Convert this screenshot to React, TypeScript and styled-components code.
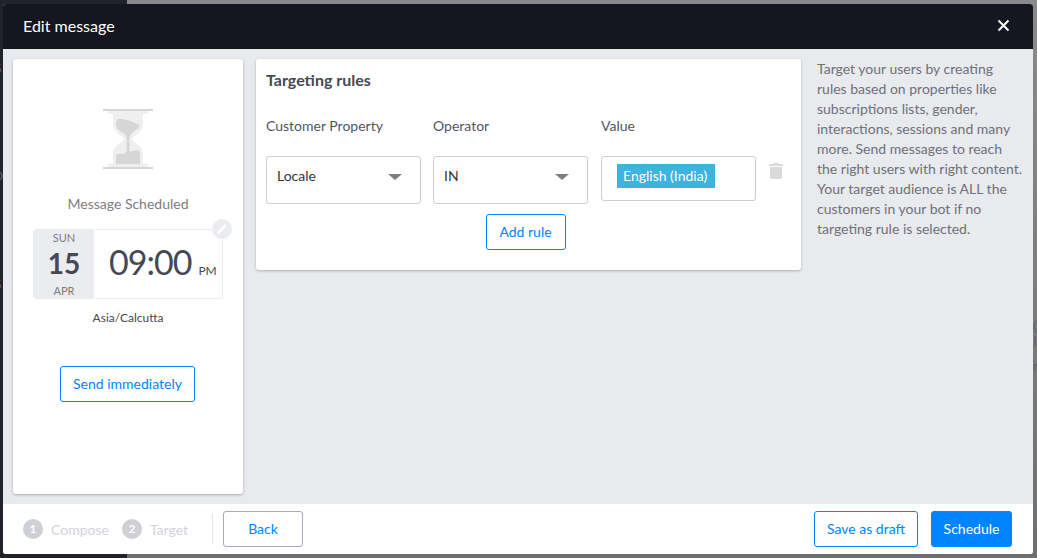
import { useState } from 'react'
import styled, { createGlobalStyle } from 'styled-components'

const GlobalStyle = createGlobalStyle`
	html, body {
		margin: 0;
		padding: 0;
		height: 100%;
		overflow: hidden;
	}
	body {
		font-family: 'Lato', 'Liberation Sans', sans-serif;
	}
	* {
		box-sizing: border-box;
	}
`

const Backdrop = styled.div`
	position: relative;
	width: 1037px;
	height: 558px;
	display: grid;
	grid-template-columns: 127px 1fr;
	overflow: hidden;
`

const DarkSide = styled.div`
	background-color: #21222a;
`

const GreySide = styled.div`
	background: linear-gradient(#8a8a8a, #6f6f6f);
`

const BehindGlyph = styled.span<{ $x: number; $y: number }>`
	position: absolute;
	left: ${({ $x }) => $x}px;
	top: ${({ $y }) => $y}px;
	font-size: 14px;
	line-height: 16px;
	color: #5c5f6b;
`

const Modal = styled.div`
	position: absolute;
	top: 4px;
	left: 3px;
	width: 1030px;
	height: 550px;
	display: flex;
	flex-direction: column;
	border-radius: 3px;
	overflow: hidden;
	background-color: #e9eaee;
`

const Header = styled.header`
	flex: 0 0 45px;
	display: flex;
	align-items: center;
	justify-content: space-between;
	padding: 0 22px 3px 20px;
	background-color: #15161f;
	color: #fff;
	font-size: 16px;
`

const CloseButton = styled.button`
	border: none;
	padding: 0;
	background: none;
	color: #fff;
	display: flex;
	width: 15px;
	height: 15px;
`

const Body = styled.main`
	flex: 1;
	display: grid;
	grid-template-columns: 230px 545px 1fr;
	column-gap: 13px;
	align-items: start;
	padding: 10px;
`

const Card = styled.section`
	background-color: #fff;
	border-radius: 3px;
	box-shadow: 0 1px 3px rgba(0, 0, 0, 0.25);
`

const StatusCard = styled(Card)`
	height: 435px;
	display: flex;
	flex-direction: column;
	align-items: center;
	padding: 50px 20px 0;
`

const StatusLabel = styled.div`
	margin-top: 26px;
	font-size: 14px;
	line-height: 18px;
	color: #7c7c85;
`

const DateBox = styled.div`
	position: relative;
	margin-top: 16px;
	width: 190px;
	height: 70px;
	display: flex;
	border: 1px solid #ebecf0;
	border-radius: 3px;
`

const DayColumn = styled.div`
	flex: 0 0 60px;
	display: flex;
	flex-direction: column;
	align-items: center;
	background-color: #ebecf0;
	color: #7b7c86;
	font-size: 11px;
	line-height: 16px;
`

const DayNumber = styled.div`
	margin: 1px 0 3px;
	font-size: 28px;
	font-weight: 700;
	line-height: 33px;
	color: #464853;
`

const TimeColumn = styled.div`
	flex: 1;
	display: flex;
	align-items: baseline;
	padding: 7px 0 0 15px;
	color: #464853;
`

const TimeValue = styled.span`
	font-size: 34px;
	letter-spacing: -1px;
	line-height: 50px;
`

const Meridiem = styled.span`
	margin-left: 7px;
	font-size: 12px;
`

const EditBadge = styled.span`
	position: absolute;
	top: -11px;
	right: -10px;
	width: 20px;
	height: 20px;
	border-radius: 50%;
	background-color: #ebecf0;
	display: flex;
	align-items: center;
	justify-content: center;
`

const Timezone = styled.div`
	margin-top: 10px;
	font-size: 12px;
	line-height: 18px;
	color: #464853;
`

const OutlineButton = styled.button<{ $width: number }>`
	width: ${({ $width }) => $width}px;
	height: 36px;
	padding: 0 0 2px;
	border: 1px solid #0084ff;
	border-radius: 3px;
	background-color: #fff;
	color: #0084ff;
	font-family: inherit;
	font-size: 14px;
`

const SendButton = styled(OutlineButton)`
	margin: 39px 1px 0 0;
`

const RulesCard = styled(Card)`
	height: 211px;
	padding: 12px 10px 0;
`

const RulesTitle = styled.h2`
	margin: 0;
	font-size: 16px;
	font-weight: 700;
	line-height: 18px;
	color: #464853;
`

const RuleGrid = styled.div`
	display: grid;
	grid-template-columns: 167px 168px 168px 1fr;
	align-items: start;
	margin-top: 28px;
`

const ColumnLabel = styled.div`
	height: 39px;
	font-size: 14px;
	line-height: 18px;
	color: #53555f;
`

const SelectBox = styled.div`
	width: 155px;
	height: 48px;
	display: flex;
	justify-content: space-between;
	padding: 11px 18px 0 10px;
	border: 1px solid #cdced4;
	border-radius: 3px;
	font-size: 14px;
	line-height: 16px;
	color: #33343c;
`

const Caret = styled.span`
	margin-top: 6px;
	width: 0;
	height: 0;
	border-left: 7px solid transparent;
	border-right: 7px solid transparent;
	border-top: 6px solid #7f7f7f;
`

const ValueBox = styled.div`
	width: 155px;
	height: 45px;
	padding: 7px 0 0 15px;
	border: 1px solid #cdced4;
	border-radius: 3px;
`

const ValueTag = styled.span`
	display: inline-block;
	height: 24px;
	padding: 0 8px 0 6px;
	background-color: #3db3de;
	color: #fff;
	font-size: 14px;
	line-height: 24px;
`

const DeleteIcon = styled.svg`
	margin: 7px 0 0 0;
	width: 14px;
	height: 16px;
	fill: #d9d9d9;
`

const AddRow = styled.div`
	display: flex;
	justify-content: center;
	margin-top: 10px;
	padding-right: 6px;
`

const HelpText = styled.p`
	margin: 0;
	padding: 0 0 0 3px;
	font-size: 14px;
	line-height: 20px;
	color: #6f7079;
`

const Footer = styled.footer`
	flex: 0 0 50px;
	display: flex;
	align-items: center;
	padding: 0 21px 0 20px;
	background-color: #fff;
`

const Step = styled.div`
	display: flex;
	align-items: center;
	gap: 8px;
	margin-right: 13px;
	font-size: 14px;
	color: #d3d3da;
`

const StepNumber = styled.span`
	width: 20px;
	height: 20px;
	border-radius: 50%;
	background-color: #cfcfd6;
	color: #fff;
	font-size: 12px;
	font-weight: 700;
	line-height: 20px;
	text-align: center;
`

const Divider = styled.div`
	width: 1px;
	height: 30px;
	margin: 0 10px 0 11px;
	background-color: #e6e6ea;
`

const BackButton = styled(OutlineButton)`
	border-color: #a9a9b8;
`

const FooterSpacer = styled.div`
	flex: 1;
`

const PrimaryButton = styled(OutlineButton)`
	margin-left: 13px;
	background-color: #0084ff;
	color: #fff;
`

const HourGlass = () => (
	<svg width='50' height='60' viewBox='0 0 50 60'>
		<rect x='0' y='0' width='50' height='2' fill='#d6d6d6' />
		<rect x='0' y='58' width='50' height='2' fill='#d6d6d6' />
		<rect x='5' y='2' width='40' height='3' fill='#efefef' />
		<rect x='5' y='55' width='40' height='3' fill='#efefef' />
		<path
			d='M10 5H40V16C40 23 31 26 29 30C31 34 40 37 40 44V55H10V44C10 37 19 34 21 30C19 26 10 23 10 16Z'
			fill='#efefef'
		/>
		<path
			d='M13 14C13 10 16 9 19 10C25 11 32 13 36 16C37 18 35 20 33 21C30 23 27 25 26.5 28V41C26.5 43 30 42 32 41.5C34 41 37 41 37 44V55H13V47C13 45 15 45 18 45C21 45 23.5 44 23.5 41V28C23 25 20 24 17 22C14 20 13 18 13 14Z'
			fill='#d6d6d6'
		/>
	</svg>
)

export default function App() {
	const [rule] = useState({ property: 'Locale', operator: 'IN', value: 'English (India)' })

	return (
		<>
			<GlobalStyle />
			<Backdrop>
				<DarkSide />
				<GreySide />
				<BehindGlyph $x={-6} $y={60}>S</BehindGlyph>
				<BehindGlyph $x={-8} $y={168}>O</BehindGlyph>
				<BehindGlyph $x={-6} $y={276}>S</BehindGlyph>
				<BehindGlyph $x={1033} $y={318}>(</BehindGlyph>
				<BehindGlyph $x={1033} $y={333}>I</BehindGlyph>
				<BehindGlyph $x={1033} $y={358}>r</BehindGlyph>
				<Modal>
					<Header>
						Edit message
						<CloseButton aria-label='Close'>
							<svg width='15' height='15' viewBox='0 0 15 15'>
								<path d='M2.5 2.5L12.5 12.5M12.5 2.5L2.5 12.5' stroke='currentColor' strokeWidth='2' />
							</svg>
						</CloseButton>
					</Header>
					<Body>
						<StatusCard>
							<HourGlass />
							<StatusLabel>Message Scheduled</StatusLabel>
							<DateBox>
								<DayColumn>
									<span>SUN</span>
									<DayNumber>15</DayNumber>
									<span>APR</span>
								</DayColumn>
								<TimeColumn>
									<TimeValue>09:00</TimeValue>
									<Meridiem>PM</Meridiem>
								</TimeColumn>
								<EditBadge>
									<svg width='12' height='12' viewBox='0 0 12 12'>
										<path d='M1 11L1.6 8.4L8.4 1.6L10.4 3.6L3.6 10.4Z' fill='#fff' />
									</svg>
								</EditBadge>
							</DateBox>
							<Timezone>Asia/Calcutta</Timezone>
							<SendButton $width={135}>Send immediately</SendButton>
						</StatusCard>
						<RulesCard>
							<RulesTitle>Targeting rules</RulesTitle>
							<RuleGrid>
								<ColumnLabel>Customer Property</ColumnLabel>
								<ColumnLabel>Operator</ColumnLabel>
								<ColumnLabel>Value</ColumnLabel>
								<span />
								<SelectBox>
									{rule.property}
									<Caret />
								</SelectBox>
								<SelectBox>
									{rule.operator}
									<Caret />
								</SelectBox>
								<ValueBox>
									<ValueTag>{rule.value}</ValueTag>
								</ValueBox>
								<DeleteIcon viewBox='0 0 14 16'>
									<path d='M5 0H9L10 1H14V3H0V1H4ZM1 4H13V14.5C13 15.3 12.3 16 11.5 16H2.5C1.7 16 1 15.3 1 14.5Z' />
								</DeleteIcon>
							</RuleGrid>
							<AddRow>
								<OutlineButton $width={80}>Add rule</OutlineButton>
							</AddRow>
						</RulesCard>
						<HelpText>
							Target your users by creating rules based on properties like subscriptions lists, gender,
							interactions, sessions and many more. Send messages to reach the right users with right
							content. Your target audience is ALL the customers in your bot if no targeting rule is
							selected.
						</HelpText>
					</Body>
					<Footer>
						<Step>
							<StepNumber>1</StepNumber>
							Compose
						</Step>
						<Step>
							<StepNumber>2</StepNumber>
							Target
						</Step>
						<Divider />
						<BackButton $width={80}>Back</BackButton>
						<FooterSpacer />
						<OutlineButton $width={104}>Save as draft</OutlineButton>
						<PrimaryButton $width={81}>Schedule</PrimaryButton>
					</Footer>
				</Modal>
			</Backdrop>
		</>
	)
}
